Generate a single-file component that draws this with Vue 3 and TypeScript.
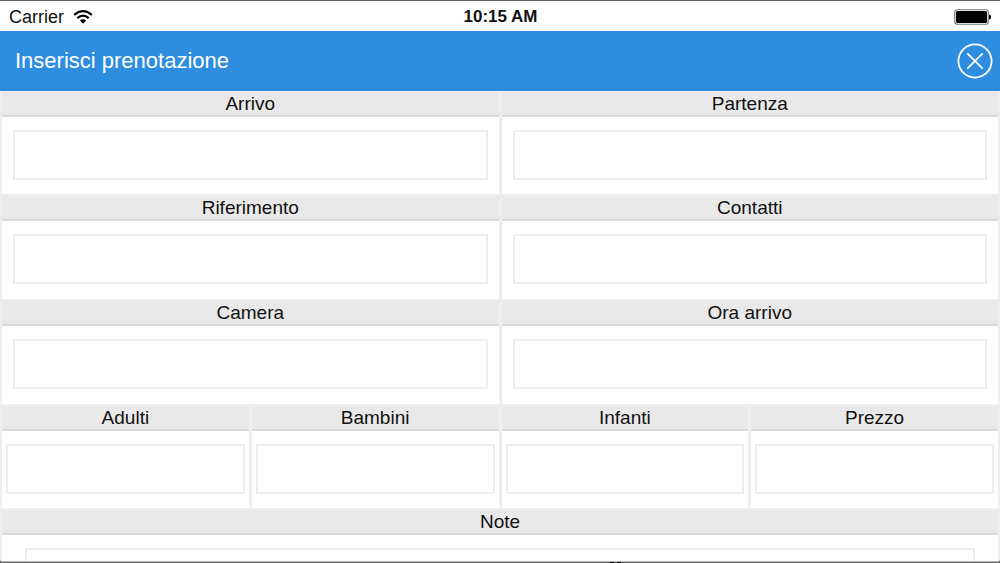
<script setup lang="ts">
import { reactive } from 'vue'

type FieldSize = 'half' | 'quarter'

interface Field {
  id: string
  label: string
  size: FieldSize
}

const fields: Field[] = [
  { id: 'arrivo', label: 'Arrivo', size: 'half' },
  { id: 'partenza', label: 'Partenza', size: 'half' },
  { id: 'riferimento', label: 'Riferimento', size: 'half' },
  { id: 'contatti', label: 'Contatti', size: 'half' },
  { id: 'camera', label: 'Camera', size: 'half' },
  { id: 'ora-arrivo', label: 'Ora arrivo', size: 'half' },
  { id: 'adulti', label: 'Adulti', size: 'quarter' },
  { id: 'bambini', label: 'Bambini', size: 'quarter' },
  { id: 'infanti', label: 'Infanti', size: 'quarter' },
  { id: 'prezzo', label: 'Prezzo', size: 'quarter' },
]

const values = reactive<Record<string, string>>({ note: '' })
</script>

<template>
  <div class="device">
    <div class="screen">
      <div class="status">
        <div class="carrier">
          <span>Carrier</span>
          <svg width="20" height="14" viewBox="0 0 20 14" aria-hidden="true">
            <g fill="none" stroke="#000" stroke-width="2.2">
              <path d="M1.2 5Q10 -2.6 18.8 5" />
              <path d="M4.3 8.2Q10 3.2 15.7 8.2" />
            </g>
            <path d="M6.8 10.6Q10 7.8 13.2 10.6L10 13.7Z" />
          </svg>
        </div>
        <span class="time">10:15 AM</span>
        <svg class="battery" width="38" height="16" viewBox="0 0 38 16" aria-hidden="true">
          <rect x="0.75" y="0.75" width="33.5" height="14.5" rx="2.5" fill="#fff" stroke="#777" stroke-width="1.2" />
          <rect x="2" y="2" width="31" height="12" rx="1.5" />
          <path d="M35 5.2Q37.2 5.8 37.2 8T35 10.8Z" />
        </svg>
      </div>

      <header class="bar">
        <h1>Inserisci prenotazione</h1>
        <button type="button" class="close" aria-label="Chiudi">
          <svg width="36" height="36" viewBox="0 0 36 36" fill="none" stroke="#fff" aria-hidden="true">
            <circle cx="18" cy="18" r="16.6" stroke-width="1.8" />
            <path d="M10.8 10.8L25.2 25.2M25.2 10.8L10.8 25.2" stroke-width="1.7" stroke-linecap="round" />
          </svg>
        </button>
      </header>

      <form class="grid" @submit.prevent>
        <div v-for="f in fields" :key="f.id" class="cell" :class="f.size">
          <label :for="f.id">{{ f.label }}</label>
          <div class="body">
            <input :id="f.id" v-model="values[f.id]" type="text" />
          </div>
        </div>
        <div class="cell note">
          <label for="note">Note</label>
          <div class="body">
            <textarea id="note" v-model="values.note"></textarea>
          </div>
        </div>
      </form>
    </div>
    <i class="mark"></i>
  </div>
</template>

<style>
body {
  background: #555;
}
</style>

<style scoped>
* {
  box-sizing: border-box;
}
.device {
  position: relative;
  height: 100vh;
  padding: 1px 0;
  overflow: hidden;
  background: #626262;
  color: #111;
  font-family: "Liberation Sans", Arial, Helvetica, sans-serif;
}
.screen {
  display: flex;
  flex-direction: column;
  height: 100%;
  overflow: hidden;
  border-bottom: 1px solid #bbb;
  border-radius: 0 0 3px 3px;
  background: #fff;
}
.status {
  flex: none;
  display: grid;
  grid-template-columns: 1fr auto 1fr;
  align-items: center;
  height: 30px;
  padding: 2px 8px 0 9px;
}
.carrier {
  display: flex;
  align-items: center;
  gap: 9px;
  font-size: 18px;
  line-height: 20px;
}
.time {
  font-size: 17px;
  font-weight: bold;
  line-height: 20px;
}
.battery {
  justify-self: end;
}
.bar {
  flex: none;
  display: flex;
  align-items: center;
  justify-content: space-between;
  height: 60px;
  padding: 0 7px 0 15px;
  background: #2e8ddf;
}
h1 {
  margin: 0;
  color: #fff;
  font-size: 22px;
  font-weight: normal;
  line-height: 26px;
}
.close {
  display: flex;
  padding: 0;
  border: 0;
  background: none;
  cursor: pointer;
}
.grid {
  flex: 1;
  display: grid;
  grid-template-columns: repeat(4, 1fr);
  grid-template-rows: 102px 103px 103px 102px 103px;
  gap: 2px 3px;
  padding: 1px 2px 2px;
  background: #eee;
}
.cell {
  display: flex;
  flex-direction: column;
  min-width: 0;
  background: #fff;
}
.half {
  grid-column: span 2;
}
.note {
  grid-column: span 4;
}
label {
  flex: none;
  height: 25px;
  border-bottom: 2px solid #d9d9d9;
  background: #e9e9e9;
  font-size: 19px;
  line-height: 23px;
  text-align: center;
}
.body {
  flex: 1;
  display: flex;
  align-items: center;
  padding: 0 11px 2px;
}
.quarter .body {
  padding: 0 4px 2px;
}
.note .body {
  align-items: flex-start;
  padding: 13px 23px;
}
input,
textarea {
  width: 100%;
  height: 50px;
  margin: 0;
  padding: 0 8px;
  border: 2px solid #eee;
  border-radius: 0;
  outline: none;
  background: #fff;
  font: inherit;
  font-size: 19px;
  resize: none;
}
.mark {
  position: absolute;
  bottom: 0;
  left: 61%;
  width: 11px;
  height: 1px;
  border: solid #000;
  border-width: 0 4px;
}
</style>
